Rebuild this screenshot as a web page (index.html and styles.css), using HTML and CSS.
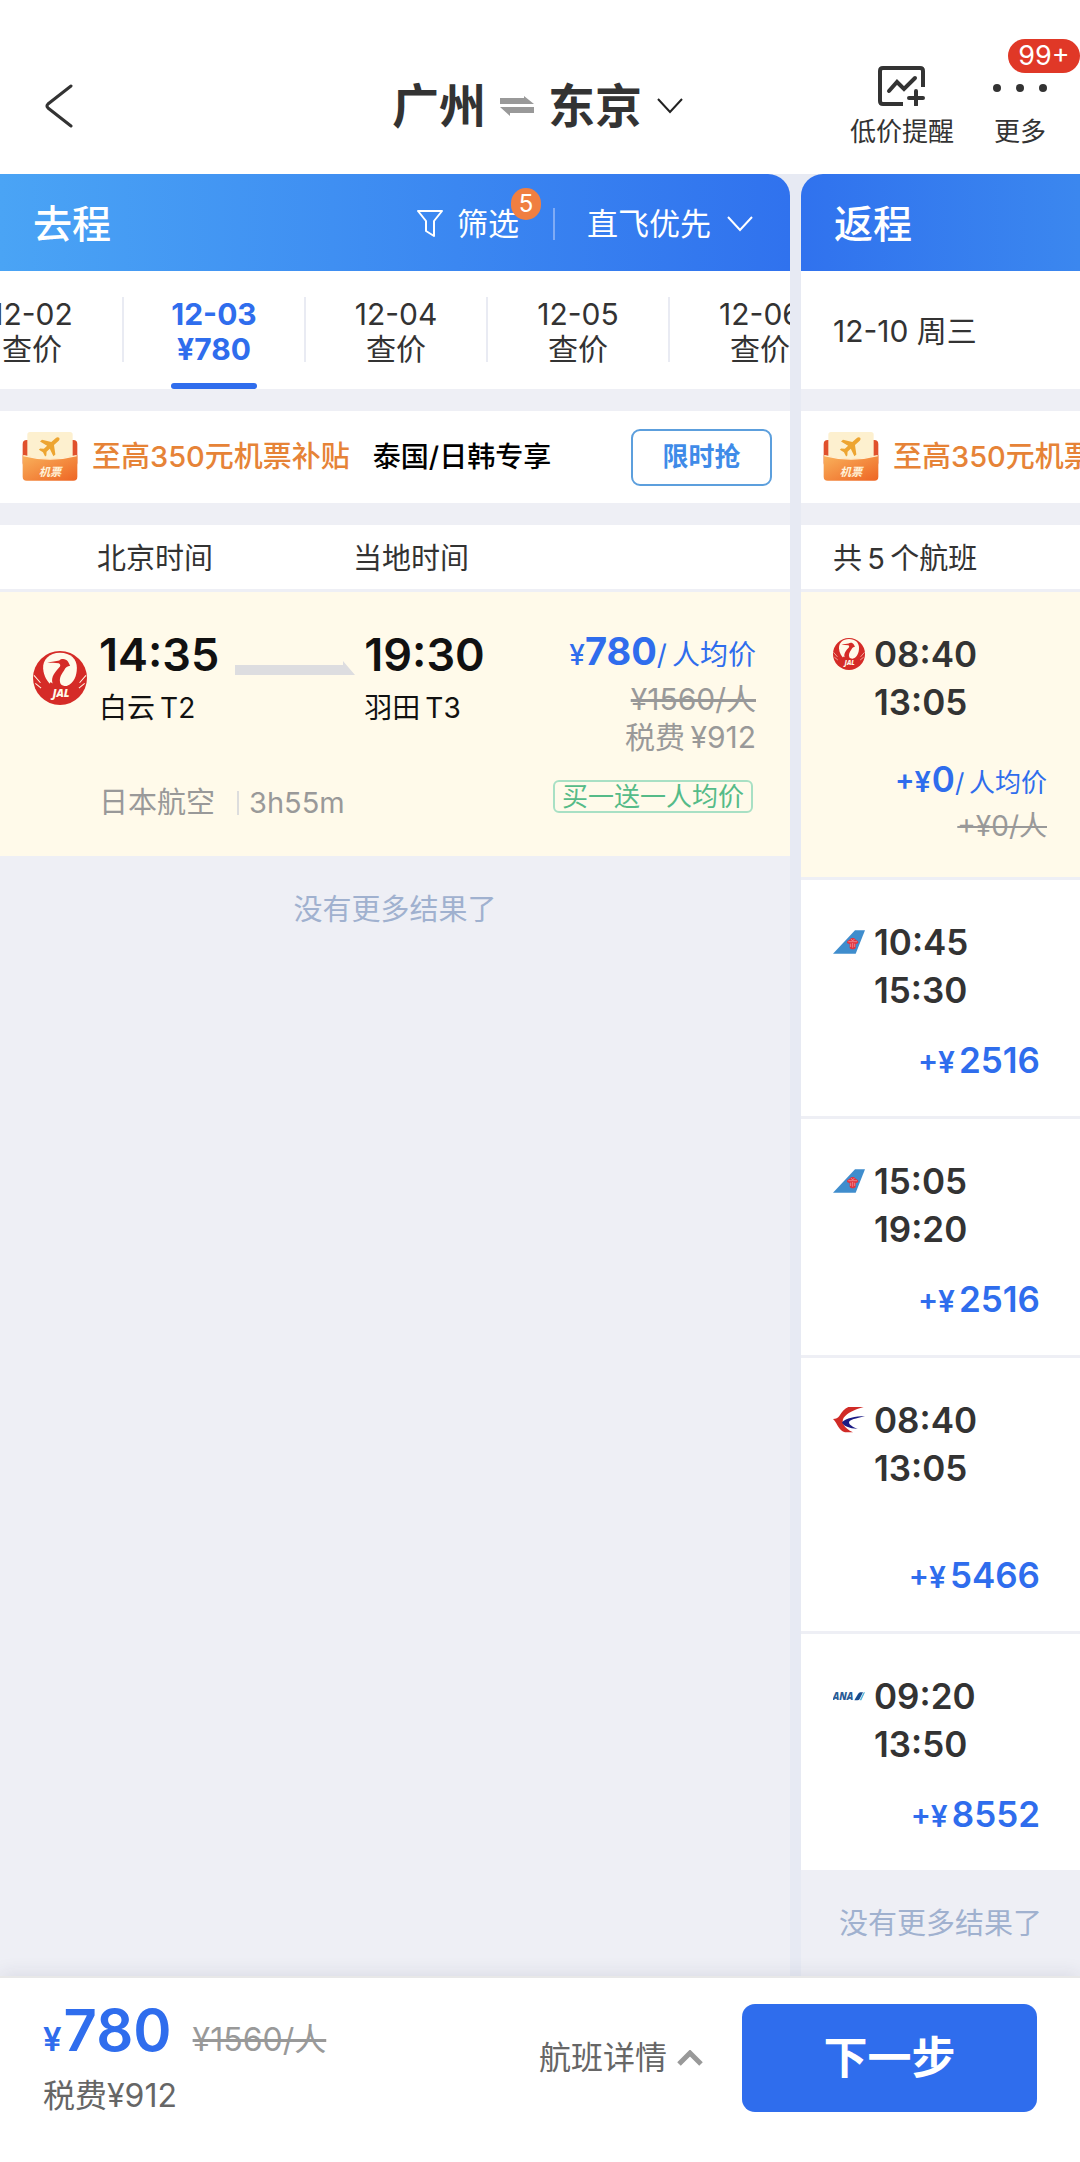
FILE: index.html
```html
<!DOCTYPE html>
<html lang="zh-CN">
<head>
<meta charset="utf-8">
<meta name="viewport" content="width=device-width, initial-scale=1">
<title>广州 ⇌ 东京</title>
<link rel="stylesheet" href="styles.css">
</head>
<body>
<svg class="sprite" aria-hidden="true">
  <symbol id="jal" viewBox="0 0 160 160">
    <circle cx="80" cy="80" r="80" fill="#d52b27"/>
    <path d="M80 5C48 5 28 26 30 52C32 76 42 92 58 104L100 104C122 94 130 72 130 50C130 24 112 5 80 5Z" fill="#fffaea"/>
    <path d="M42 34C56 31 68 31 78 28C84 22 98 22 104 32L110 44C102 45 97 48 92 58C82 72 76 84 82 98C88 104 96 106 106 103L116 112L44 112L52 92L58 96C52 76 66 62 80 46C82 42 80 37 76 36C66 36 54 35 42 34Z" fill="#d52b27"/>
    <path d="M3 72L22 94M7 96L24 110M157 72L138 94M153 96L136 110" stroke="#fffaea" stroke-width="3"/>
    <text x="83" y="137" text-anchor="middle" class="jal-word">JAL</text>
  </symbol>
  <symbol id="csair" viewBox="0 0 96 70">
    <path d="M0 70L66 0H96L68 70Z" fill="#3f8dcd"/>
    <path d="M42 38C42 30 50 30 51 27C54 22 64 22 67 27C68 30 76 30 76 38L68 42V52C65 58 53 58 50 52V42Z" fill="#e3343f"/>
    <path d="M46 34H72M53 40V50M59 38V52M65 40V50M54 26L59 32L64 26" stroke="#f3a6a8" stroke-width="2" fill="none"/>
  </symbol>
  <symbol id="ceair" viewBox="0 0 96 78">
    <path d="M0 36C9 36 15 33 19 27C27 14 34 5 46 0H92C64 8 44 17 32 32C24 46 32 62 60 76H36C18 72 14 50 0 36Z" fill="#d02b27"/>
    <path d="M27 46C40 33 65 28 96 28C68 35 50 38 48 46C48 54 60 60 74 66C48 64 32 58 27 46Z" fill="#1b1b84"/>
  </symbol>
  <symbol id="ana" viewBox="0 0 96 28">
    <text x="-1" y="27" class="ana-word">ANA</text>
    <path d="M64 27L75 8Q78 3 82 3H90L80 23Q78 27 73 27Z" fill="#174a8c"/>
    <path d="M92 3H96L85 27H80Z" fill="#4fb4dc"/>
  </symbol>
  <symbol id="coupon" viewBox="0 0 168 150">
    <linearGradient id="pocket" x1="0" y1="0" x2="1" y2="1">
      <stop offset="0" stop-color="#f9b25c"/><stop offset="1" stop-color="#ee6524"/>
    </linearGradient>
    <rect x="2" y="24" width="164" height="80" rx="12" fill="#e0502c"/>
    <rect x="16" y="0" width="136" height="90" rx="8" fill="#fdf0cf"/>
    <path d="M2 70Q84 92 166 70V134Q166 146 154 146H14Q2 146 2 134Z" fill="url(#pocket)"/>
    <path d="M4 71Q84 92 164 71" stroke="#fff0d2" stroke-width="4" fill="none"/>
    <g transform="translate(86 40) rotate(48)" fill="#eda531">
      <path d="M0 -34Q6 -34 6 -24V-8L30 8V16L6 9V22L14 30V35L0 31L-14 35V30L-6 22V9L-30 16V8L-6 -8V-24Q-6 -34 0 -34Z"/>
    </g>
    <text x="84" y="131" text-anchor="middle" class="coupon-word">机票</text>
  </symbol>
</svg>

<header class="topbar">
  <button class="back" type="button" aria-label="返回">
    <svg width="30" height="44" viewBox="0 0 30 44"><path d="M27 2L4 20Q2 22 4 24L27 42" fill="none" stroke="#333" stroke-width="3" stroke-linecap="round"/></svg>
  </button>
  <button class="route" type="button">
    <span>广州</span>
    <svg width="34" height="20" viewBox="0 0 34 20" fill="#999"><path d="M0 2H24V0L34 8H0ZM34 11H0L10 20V17H34Z"/></svg>
    <span>东京</span>
    <svg width="28" height="16" viewBox="0 0 28 16"><path d="M2 1L14 14L26 1" fill="none" stroke="#222" stroke-width="2"/></svg>
  </button>
  <div class="actions">
    <button class="action" type="button">
      <svg width="48" height="40" viewBox="0 0 48 40" fill="none" stroke="#333" stroke-width="4"><path d="M25 38H5Q2 38 2 35V5Q2 2 5 2H42Q45 2 45 5V21"/><path d="M11 25L19 16L26 23L37 12" stroke-linecap="round"/><path d="M38 25V39M31 32H45" stroke-linecap="round"/></svg>
      <span>低价提醒</span>
    </button>
    <button class="action" type="button">
      <svg width="56" height="40" viewBox="0 0 56 40" fill="#333"><circle cx="5" cy="22" r="4"/><circle cx="28" cy="22" r="4"/><circle cx="51" cy="22" r="4"/></svg>
      <span>更多</span>
      <span class="count">99+</span>
    </button>
  </div>
</header>

<main class="board">
  <section class="leg leg-out">
    <div class="leg-head">
      <h2>去程</h2>
      <div class="tools">
        <button class="tool tool-filter" type="button">
          <svg width="26" height="28" viewBox="0 0 26 28"><path d="M1 1H25L17 11V26L9 21V11Z" fill="none" stroke="#fff" stroke-width="2" stroke-linejoin="round"/></svg>
          <span>筛选</span>
          <span class="badge">5</span>
        </button>
        <button class="tool tool-sort" type="button">
          <span>直飞优先</span>
          <svg width="26" height="16" viewBox="0 0 26 16"><path d="M1 1L13 14L25 1" fill="none" stroke="#fff" stroke-width="2"/></svg>
        </button>
      </div>
    </div>
    <nav class="dates">
      <button class="date" type="button">12-02<br>查价</button>
      <button class="date date-on" type="button">12-03<br>¥780</button>
      <button class="date" type="button">12-04<br>查价</button>
      <button class="date" type="button">12-05<br>查价</button>
      <button class="date" type="button">12-06<br>查价</button>
    </nav>
    <div class="promo">
      <svg width="56" height="50"><use href="#coupon"/></svg>
      <strong class="promo-main">至高350元机票补贴</strong>
      <strong class="promo-sub">泰国/日韩专享</strong>
      <button class="promo-go" type="button">限时抢</button>
    </div>
    <div class="list-head list-head-out"><span>北京时间</span><span>当地时间</span></div>
    <article class="flight">
      <svg class="flight-logo" width="54" height="54"><use href="#jal"/></svg>
      <div class="flight-times">
        <div class="stop"><time>14:35</time><span>白云&thinsp;T2</span></div>
        <svg class="arrow" width="120" height="14" viewBox="0 0 120 14"><path d="M0 4H108V0L120 14H0Z" fill="#dddde0"/></svg>
        <div class="stop"><time>19:30</time><span>羽田&thinsp;T3</span></div>
      </div>
      <div class="flight-price">
        <p class="fare"><span class="yen">¥</span><b>780</b>/&thinsp;人均价</p>
        <p><s>¥1560/人</s></p>
        <p>税费&thinsp;¥912</p>
      </div>
      <p class="flight-meta"><span>日本航空</span><span class="duration">3h55m</span></p>
      <p class="tag">买一送一人均价</p>
    </article>
    <p class="end">没有更多结果了</p>
  </section>

  <section class="leg leg-back">
    <div class="leg-head"><h2>返程</h2></div>
    <div class="day">12-10 周三</div>
    <div class="promo">
      <svg width="56" height="50"><use href="#coupon"/></svg>
      <strong class="promo-main">至高350元机票补贴</strong>
    </div>
    <div class="list-head">共&thinsp;5&thinsp;个航班</div>
    <ul class="returns">
      <li class="return return-on">
        <svg width="32" height="32"><use href="#jal"/></svg>
        <div class="return-times"><time>08:40</time><time>13:05</time></div>
        <p class="return-price"><small>+¥</small>0<span class="unit">/&thinsp;人均价</span></p>
        <p class="return-was"><s>+¥0/人</s></p>
      </li>
      <li class="return">
        <svg width="32" height="32"><use href="#csair"/></svg>
        <div class="return-times"><time>10:45</time><time>15:30</time></div>
        <p class="return-price"><small>+¥</small>2516</p>
      </li>
      <li class="return">
        <svg width="32" height="32"><use href="#csair"/></svg>
        <div class="return-times"><time>15:05</time><time>19:20</time></div>
        <p class="return-price"><small>+¥</small>2516</p>
      </li>
      <li class="return return-tall">
        <svg width="32" height="32"><use href="#ceair"/></svg>
        <div class="return-times"><time>08:40</time><time>13:05</time></div>
        <p class="return-price"><small>+¥</small>5466</p>
      </li>
      <li class="return">
        <svg width="32" height="32"><use href="#ana"/></svg>
        <div class="return-times"><time>09:20</time><time>13:50</time></div>
        <p class="return-price"><small>+¥</small>8552</p>
      </li>
    </ul>
    <p class="end">没有更多结果了</p>
  </section>
</main>

<footer class="paybar">
  <div class="total">
    <p class="total-line"><span class="total-price"><small>¥</small>780</span><s>¥1560/人</s></p>
    <p class="total-tax">税费¥912</p>
  </div>
  <button class="details" type="button">
    <span>航班详情</span>
    <svg width="26" height="16" viewBox="0 0 26 16"><path d="M2 14L13 3L24 14" fill="none" stroke="#999" stroke-width="5"/></svg>
  </button>
  <button class="next" type="button">下一步</button>
</footer>
</body>
</html>
```
FILE: styles.css
```css
* { box-sizing: border-box; }

body {
  margin: 0;
  min-height: 100vh;
  display: flex;
  flex-direction: column;
  background: #fff;
  color: #333;
  font-family: Inter, "Noto Sans CJK SC", sans-serif;
  font-size: 29px;
  line-height: 40px;
}

h2, p, ul { margin: 0; padding: 0; font-weight: inherit; }
ul { list-style: none; }
svg { display: block; flex: none; }
small, b { line-height: 1; }
.sprite { position: absolute; width: 0; height: 0; }

button {
  border: 0;
  padding: 0;
  background: none;
  color: inherit;
  font: inherit;
  white-space: nowrap;
  cursor: pointer;
}

.jal-word { font: italic 800 32px "Open Sans", sans-serif; fill: #fffaea; }
.ana-word { font: italic 800 29px "Open Sans", sans-serif; fill: #2a5c96; }
.coupon-word { font: italic 700 34px "Noto Sans CJK SC", sans-serif; fill: #fff3d9; }

/* top bar */
.topbar {
  display: grid;
  grid-template-columns: 1fr auto 1fr;
  align-items: center;
  height: 174px;
  padding: 38px 32px 0;
}
.back { justify-self: start; margin-left: 12px; }
.route {
  display: flex;
  align-items: center;
  gap: 14px;
  margin-right: 4px;
  font-size: 47px;
  font-weight: 600;
  line-height: 60px;
}
.actions { display: flex; justify-self: end; gap: 38px; }
.action {
  position: relative;
  display: flex;
  flex-direction: column;
  align-items: center;
  gap: 12px;
  font-size: 26px;
  line-height: 28px;
}
.count {
  position: absolute;
  top: -27px;
  left: 16px;
  width: 72px;
  height: 34px;
  border-radius: 17px;
  background: #e03827;
  color: #fff;
  font-size: 27px;
  line-height: 34px;
}

/* two leg columns */
.board {
  flex: 1;
  display: grid;
  grid-template-columns: minmax(0, 1fr) 279px;
  gap: 11px;
  background: #e7eaf3;
}
.leg {
  overflow: hidden;
  background: linear-gradient(#e7eaf3 97px, #eeeff5 97px);
}
.leg-head {
  display: flex;
  align-items: center;
  justify-content: space-between;
  height: 97px;
  padding: 2px 37px 0 33px;
  color: #fff;
}
.leg-head h2 { font-size: 39px; font-weight: 500; }
.leg-out .leg-head {
  border-radius: 0 22px 0 0;
  background: linear-gradient(90deg, #4aa4f5, #3072ee);
}
.leg-back .leg-head {
  border-radius: 22px 0 0 0;
  background: linear-gradient(90deg, #3072ee, #3b87ef);
}
.tools { display: flex; align-items: center; font-size: 31px; line-height: 32px; }
.tool { display: flex; align-items: center; }
.tool-filter { position: relative; gap: 14px; padding-right: 34px; }
.tool-sort { gap: 16px; padding-left: 32px; border-left: 2px solid #7fabf5; }
.badge {
  position: absolute;
  top: -20px;
  right: 12px;
  width: 30px;
  height: 32px;
  border-radius: 16px;
  background: #f07f41;
  font-size: 24px;
  line-height: 32px;
}

.dates {
  display: flex;
  height: 118px;
  margin-bottom: 22px;
  padding-top: 26px;
  margin-left: -58px;
  background: #fff;
}
.date {
  position: relative;
  flex: none;
  width: 182px;
  height: 65px;
  border-right: 2px solid #e9ebf3;
  font-size: 30px;
  line-height: 35px;
}
.date-on { color: #2f6ded; font-weight: 700; }
.date-on::after {
  content: "";
  position: absolute;
  left: 47px;
  bottom: -27px;
  width: 86px;
  height: 6px;
  border-radius: 3px;
  background: #2f6ded;
}
.day { height: 118px; margin-bottom: 22px; padding: 40px 32px; background: #fff; font-size: 30px; white-space: nowrap; }

.promo {
  display: flex;
  align-items: center;
  height: 92px;
  margin-bottom: 22px;
  padding: 0 18px 0 22px;
  background: #fff;
  white-space: nowrap;
}
.promo-main { margin: 0 23px 0 14px; color: #e68337; font-weight: 500; }
.promo-sub { color: #000; font-size: 28px; font-weight: 500; }
.promo-go {
  width: 141px;
  height: 57px;
  margin-left: auto;
  border: 2px solid #5c9fdd;
  border-radius: 9px;
  color: #3f8be8;
  font-size: 26px;
  font-weight: 600;
}

.list-head { height: 67px; padding: 14px 32px 0; border-bottom: 3px solid #eeeff5; background: #fff; white-space: nowrap; }
.list-head-out { display: flex; gap: 140px; padding-left: 97px; }

/* outbound flight */
.flight {
  display: grid;
  grid-template-columns: auto auto 1fr;
  grid-template-rows: 153px auto;
  padding: 38px 34px 33px 33px;
  background: #fffaea;
}
.flight-logo { margin: 21px 12px 0 0; }
.flight-times { display: flex; }
.stop { display: flex; flex-direction: column; color: #111; font-size: 28px; }
.stop time { font-size: 45px; font-weight: 600; line-height: 50px; margin-bottom: 8px; }
.arrow { margin: 31px 9px 0 16px; }
.flight-price { color: #999; font-size: 30px; line-height: 38px; text-align: right; }
.fare { color: #2f6ded; font-size: 28px; line-height: 50px; }
.fare b { font-size: 38px; font-weight: 700; }
.yen { font-weight: 500; }
.flight-meta { grid-column: 2; display: flex; align-items: center; gap: 22px; color: #999; }
.duration { padding-left: 10px; border-left: 2px solid #ddd; line-height: 24px; }
.tag {
  justify-self: end;
  margin: -3px 3px 0 0;
  height: 33px;
  padding: 0 7px;
  border: 2px solid #a8e0c4;
  border-radius: 6px;
  color: #55bb88;
  font-size: 26px;
  line-height: 29px;
}
.end { padding: 34px 0 32px; color: #a0b1cf; text-align: center; }

/* return flights */
.return {
  display: grid;
  grid-template-columns: 32px 1fr;
  column-gap: 9px;
  padding: 38px 33px 32px 32px;
  border-bottom: 3px solid #eeeff5;
  background: #fff;
  font-size: 35px;
  font-weight: 600;
  line-height: 48px;
}
.return:last-child { border-bottom: 0; }
.return > svg { align-self: start; margin: 8px 0; }
.return time { display: block; }
.return-price { grid-column: 1 / 3; margin: 22px 7px 0 0; color: #2f6ded; text-align: right; }
.return-price small { margin-right: 4px; font-size: 30px; }
.return-on { background: #fffaea; }
.return-on .return-price { margin: 29px 0 4px; }
.return-on small { margin-right: 1px; font-size: 29px; }
.return-tall .return-price { margin-top: 59px; }
.unit { font-size: 26px; font-weight: 400; line-height: 1; }
.return-was { grid-column: 1 / 3; color: #999; font-size: 28px; font-weight: 400; line-height: 38px; text-align: right; }

/* bottom bar */
.paybar {
  display: flex;
  align-items: center;
  height: 187px;
  padding: 0 43px 26px;
  border-top: 2px solid #e8e8e8;
  background: #fff;
  box-shadow: 0 -4px 16px rgba(40, 40, 80, .08);
  color: #666;
  font-size: 32px;
  white-space: nowrap;
}
.total-line { display: flex; align-items: baseline; gap: 21px; margin-bottom: 6px; color: #999; line-height: 60px; }
.total-price { color: #2f6ded; font-size: 58px; font-weight: 600; }
.total-price small { margin-right: 2px; font-size: 33px; }
.details { display: flex; align-items: center; gap: 10px; margin-left: auto; }
.next {
  width: 295px;
  height: 108px;
  margin-left: 39px;
  border-radius: 13px;
  background: #2f6ded;
  color: #fff;
  font-size: 44px;
  font-weight: 600;
}
```
